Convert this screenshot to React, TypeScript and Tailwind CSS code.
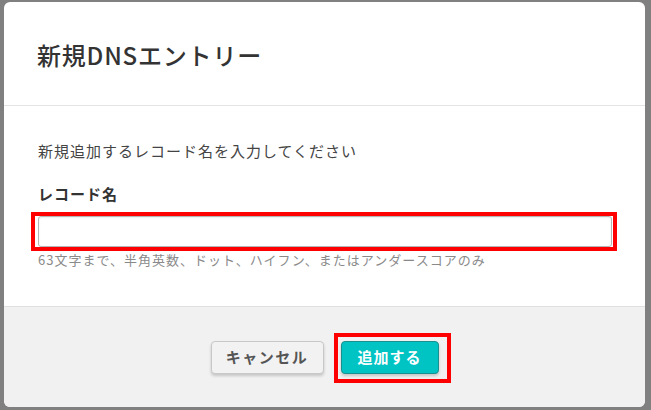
export default function App() {
  return (
    <div
      className="w-[651px] h-[410px] bg-[#808080] pt-[2px] pl-[4px] pr-[6px] pb-[3px]"
      style={{ fontFamily: '"Noto Sans CJK JP", "Noto Sans", sans-serif' }}
    >
      <div className="h-full bg-white rounded-[6px] overflow-hidden flex flex-col">
        <div className="h-[104px] flex items-center pl-[33px] border-b border-[#e3e3e3]">
          <h1 className="text-[24px] font-medium text-[#333] tracking-[0.8px] pt-[2px]">新規DNSエントリー</h1>
        </div>

        <div className="h-[200px] pl-[34px] pr-[33px] pt-[35px]">
          <p className="text-[15px] leading-[20px] text-[#444] tracking-[1px]">
            新規追加するレコード名を入力してください
          </p>
          <label className="block mt-[23px] text-[15px] leading-[20px] font-bold text-[#333] tracking-[1px]">
            レコード名
          </label>
          <div className="relative mt-[12px]">
            <input
              type="text"
              className="block w-full h-[31px] border border-[#b5b5b5] rounded-[3px] bg-white shadow-[inset_0_1px_2px_rgba(0,0,0,0.08)] outline-none px-2"
            />
            <div className="absolute -left-[7px] -right-[5px] -top-[4px] -bottom-[4px] border-4 border-[#ff0000] pointer-events-none" />
          </div>
          <p className="mt-[4px] text-[13px] leading-[18px] text-[#8a8a8a] tracking-[1px]">
            63文字まで、半角英数、ドット、ハイフン、またはアンダースコアのみ
          </p>
        </div>

        <div className="flex-1 bg-[#f1f1f1] border-t border-[#e0e0e0] flex items-center justify-center gap-[17px]">
          <button className="w-[113px] h-[33px] rounded-[4px] border border-[#c8c8c8] bg-[#f2f2f2] shadow-[0_2px_3px_rgba(0,0,0,0.18)] text-[15px] font-bold text-[#555] tracking-[1.5px]">
            キャンセル
          </button>
          <div className="relative">
            <button className="w-[98px] h-[33px] rounded-[4px] border border-[#1a8f8f] bg-[#00c4c4] shadow-[0_2px_3px_rgba(0,0,0,0.18)] text-[15px] font-bold text-white tracking-[1px]">
              追加する
            </button>
            <div className="absolute -left-[7px] -right-[12px] -top-[8px] -bottom-[9px] border-4 border-[#ff0000] pointer-events-none" />
          </div>
        </div>
      </div>
    </div>
  );
}
